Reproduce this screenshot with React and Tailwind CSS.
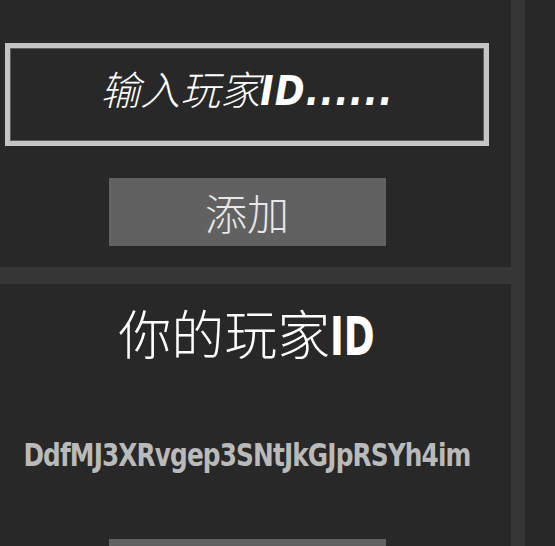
import React from "react";

const cjk = "font-['Noto_Sans_CJK_SC','Noto_Sans',sans-serif]";
const narrow = "font-['DejaVu_Sans_Condensed','Liberation_Sans_Narrow','DejaVu_Sans',sans-serif]";

function AddPanel() {
  return (
    <div className="shrink-0 h-[267px] bg-[#282828] pr-[17px] pt-[43px] flex flex-col items-center">
      <div className="shrink-0 w-[484px] h-[103px] pb-[11px] border-[5px] border-[#c4c4c4] shadow-[inset_0_0_0_1px_#5c5c5c] flex items-center justify-center">
        <span className={`${cjk} italic font-light text-[40px] text-white leading-none`}>
          输入玩家<span className={`${narrow} font-bold tracking-[1px]`}>ID......</span>
        </span>
      </div>
      <button className="shrink-0 mt-[32px] w-[277px] h-[68px] bg-[#616161] flex items-center justify-center">
        <span className={`${cjk} font-light text-[42px] text-[#e8e8e8] leading-none`}>添加</span>
      </button>
    </div>
  );
}

function IdPanel() {
  return (
    <div className="shrink-0 mt-[17px] h-[300px] bg-[#282828] pr-[17px] pt-[22px] flex flex-col items-center">
      <div className={`${cjk} font-light text-[53px] text-white leading-none`}>
        你的玩家
        <span className={`${narrow} font-bold inline-block origin-left scale-x-[0.78] mr-[-12px]`}>ID</span>
      </div>
      <div className={`${narrow} mt-[76px] font-bold text-[32px] tracking-[-1px] text-[#bababa] leading-none whitespace-nowrap scale-x-[0.86]`}>
        DdfMJ3XRvgep3SNtJkGJpRSYh4im
      </div>
      <button className="shrink-0 mt-[68px] w-[277px] h-[68px] bg-[#616161]"></button>
    </div>
  );
}

export default function App() {
  return (
    <div className="w-[555px] h-[546px] overflow-hidden bg-[#363636] flex">
      <div className="w-[511px] shrink-0 flex flex-col">
        <AddPanel />
        <IdPanel />
      </div>
      <div className="ml-[14px] flex-1 bg-[#282828]"></div>
    </div>
  );
}
